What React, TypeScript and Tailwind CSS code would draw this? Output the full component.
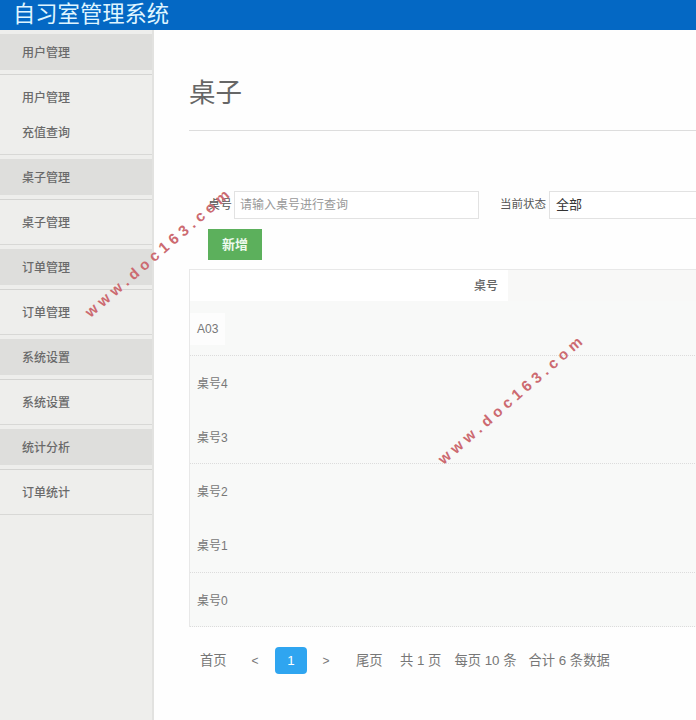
const font = '[font-family:"Liberation_Sans","Noto_Sans_CJK_SC",sans-serif]';

const groups: { title: string; items: string[]; h: string }[] = [
  { title: "用户管理", items: ["用户管理", "充值查询"], h: "h-[80px]" },
  { title: "桌子管理", items: ["桌子管理"], h: "h-[45px]" },
  { title: "订单管理", items: ["订单管理"], h: "h-[45px]" },
  { title: "系统设置", items: ["系统设置"], h: "h-[45px]" },
  { title: "统计分析", items: ["订单统计"], h: "h-[45px]" },
];

const rows: { label: string; h: string; line: boolean; patch: string }[] = [
  { label: "A03", h: "h-[55px]", line: true, patch: "bg-[#fdfdfd]" },
  { label: "桌号4", h: "h-[54px]", line: false, patch: "" },
  { label: "桌号3", h: "h-[54px]", line: true, patch: "" },
  { label: "桌号2", h: "h-[54px]", line: false, patch: "" },
  { label: "桌号1", h: "h-[55px]", line: true, patch: "" },
  { label: "桌号0", h: "h-[54px]", line: true, patch: "" },
];

function Sidebar() {
  return (
    <aside className="w-[154px] shrink-0 bg-[#eeeeec] border-r-2 border-[#e2e2e0]">
      {groups.map((g) => (
        <div key={g.title}>
          <div className="h-[45px] pt-1 border-b border-[#d4d4d2]">
            <div className="h-9 bg-[#dededc] pl-[22px] flex items-center pt-px text-xs font-medium text-[#6a6a6a]">{g.title}</div>
          </div>
          <div className={`${g.h} py-[5px] border-b border-[#d8d8d6]`}>
            {g.items.map((it) => (
              <div key={it} className="h-[35px] pl-[22px] flex items-center text-xs font-medium text-[#6a6a6a]">{it}</div>
            ))}
          </div>
        </div>
      ))}
    </aside>
  );
}

function Pagination() {
  return (
    <div className="mt-[20px] ml-[11px] flex items-center text-[13.3px] text-[#777] whitespace-nowrap">
      <span className="w-[27px]">首页</span>
      <span className="ml-[24px] w-[8px] text-xs text-center">&lt;</span>
      <span className="ml-[16px] w-8 h-[27px] rounded bg-[#2fa5f0] text-white flex items-center justify-center">1</span>
      <span className="ml-[15px] w-[8px] text-xs text-center">&gt;</span>
      <span className="ml-[26px] w-[27px]">尾页</span>
      <span className="ml-[17px]">共 1 页</span>
      <span className="ml-[13px]">每页 10 条</span>
      <span className="ml-[12px]">合计 6 条数据</span>
    </div>
  );
}

function Watermark({ pos }: { pos: string }) {
  return (
    <div className={`absolute ${pos} w-[200px] flex justify-center -rotate-[41deg] text-[15px] font-bold tracking-[4.6px] whitespace-nowrap text-[#cc6a70]`}>
      www.doc163.com
    </div>
  );
}

export default function App() {
  return (
    <div className={`relative w-[696px] h-[720px] overflow-hidden bg-white flex flex-col ${font}`}>
      <header className="h-[30px] shrink-0 bg-[#0468c4] pl-[13px] flex items-center text-[22.3px] leading-none text-[#dff5ff]">
        自习室管理系统
      </header>
      <div className="flex-1 flex min-h-0">
        <Sidebar />
        <main className="flex-1 min-w-0 pl-[35px] overflow-hidden bg-[#fefefe]">
          <h1 className="mt-[44px] h-[38px] leading-[38px] text-[26.5px] font-normal text-[#666]">桌子</h1>
          <div className="mt-[18px] h-px bg-[#dddddd]" />
          <div className="mt-[60px] ml-[19px] flex items-center h-[28px] text-xs text-[#555] whitespace-nowrap">
            <span className="w-[26px] shrink-0">桌号</span>
            <div className="w-[245px] shrink-0 h-[28px] border border-[#e2e2e2] bg-white pl-[5px] flex items-center text-xs text-[#999]">请输入桌号进行查询</div>
            <span className="ml-[21px] w-[49px] shrink-0 text-[11.5px]">当前状态</span>
            <div className="w-[300px] shrink-0 h-[28px] border border-[#e2e2e2] bg-white pl-[6px] flex items-center text-[13px] text-[#333]">全部</div>
          </div>
          <button className="mt-[10px] ml-[19px] w-[54px] h-[31px] bg-[#5cb05c] text-[#eefaee] text-[13px] font-bold block">新增</button>
          <div className="mt-[9px] border-t border-[#e8e8e8] border-l w-[600px]">
            <div className="h-[31px] bg-[#f8f8f7] flex">
              <div className="w-[318px] bg-white pr-[10px] flex items-center justify-end text-xs font-medium text-[#666]">桌号</div>
            </div>
            {rows.map((r) => (
              <div key={r.label} className={`${r.h} bg-[#f8f9f8] flex items-center pt-[2px] text-xs text-[#777] ${r.line ? "border-b border-dotted border-[#dcdcdc]" : ""}`}>
                <span className={`pl-[7px] pr-[7px] py-2 ${r.patch}`}>{r.label}</span>
              </div>
            ))}
          </div>
          <Pagination />
        </main>
      </div>
      <Watermark pos="left-[59px] top-[241px]" />
      <Watermark pos="left-[412px] top-[388px]" />
    </div>
  );
}
